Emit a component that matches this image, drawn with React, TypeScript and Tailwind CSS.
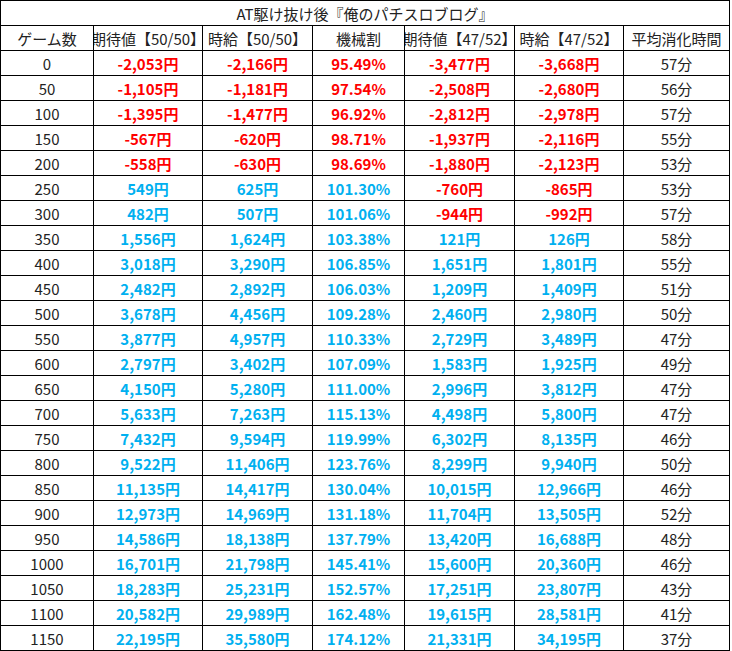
import React from "react";

const headers = ["ゲーム数", "期待値【50/50】", "時給【50/50】", "機械割", "期待値【47/52】", "時給【47/52】", "平均消化時間"];

const rows: string[][] = [
    ["0", "-2,053円", "-2,166円", "95.49%", "-3,477円", "-3,668円", "57分"],
    ["50", "-1,105円", "-1,181円", "97.54%", "-2,508円", "-2,680円", "56分"],
    ["100", "-1,395円", "-1,477円", "96.92%", "-2,812円", "-2,978円", "57分"],
    ["150", "-567円", "-620円", "98.71%", "-1,937円", "-2,116円", "55分"],
    ["200", "-558円", "-630円", "98.69%", "-1,880円", "-2,123円", "53分"],
    ["250", "549円", "625円", "101.30%", "-760円", "-865円", "53分"],
    ["300", "482円", "507円", "101.06%", "-944円", "-992円", "57分"],
    ["350", "1,556円", "1,624円", "103.38%", "121円", "126円", "58分"],
    ["400", "3,018円", "3,290円", "106.85%", "1,651円", "1,801円", "55分"],
    ["450", "2,482円", "2,892円", "106.03%", "1,209円", "1,409円", "51分"],
    ["500", "3,678円", "4,456円", "109.28%", "2,460円", "2,980円", "50分"],
    ["550", "3,877円", "4,957円", "110.33%", "2,729円", "3,489円", "47分"],
    ["600", "2,797円", "3,402円", "107.09%", "1,583円", "1,925円", "49分"],
    ["650", "4,150円", "5,280円", "111.00%", "2,996円", "3,812円", "47分"],
    ["700", "5,633円", "7,263円", "115.13%", "4,498円", "5,800円", "47分"],
    ["750", "7,432円", "9,594円", "119.99%", "6,302円", "8,135円", "46分"],
    ["800", "9,522円", "11,406円", "123.76%", "8,299円", "9,940円", "50分"],
    ["850", "11,135円", "14,417円", "130.04%", "10,015円", "12,966円", "46分"],
    ["900", "12,973円", "14,969円", "131.18%", "11,704円", "13,505円", "52分"],
    ["950", "14,586円", "18,138円", "137.79%", "13,420円", "16,688円", "48分"],
    ["1000", "16,701円", "21,798円", "145.41%", "15,600円", "20,360円", "46分"],
    ["1050", "18,283円", "25,231円", "152.57%", "17,251円", "23,807円", "43分"],
    ["1100", "20,582円", "29,989円", "162.48%", "19,615円", "28,581円", "41分"],
    ["1150", "22,195円", "35,580円", "174.12%", "21,331円", "34,195円", "37分"],
];

// red for losses (and payout under 100%), light blue otherwise
const valueColor = (v: string) => {
    if (v.startsWith("-")) return "text-[#ff0000]";
    if (v.endsWith("%") && parseFloat(v) < 100) return "text-[#ff0000]";
    return "text-[#00b0f0]";
};

const cell = "h-[25px] flex items-center justify-center overflow-hidden whitespace-nowrap border-r border-b border-black";

export default function App() {
    return (
        <div className="w-[732px] h-[651px] bg-white" style={{fontFamily: '"Noto Sans CJK JP", "Noto Sans", sans-serif'}}>
            <div className="grid grid-cols-[93px_109px_110px_92px_110px_109px_106px] w-[730px] border-l border-t border-black text-[15px] leading-none text-[#222]">
                <div className={`${cell} col-span-7`}>AT駆け抜け後『俺のパチスロブログ』</div>

                {headers.map((h, i) => (
                    <div key={i} className={cell}>{h}</div>
                ))}

                {rows.map((row, r) =>
                    row.map((v, c) => (
                        <div
                            key={`${r}-${c}`}
                            className={c === 0 || c === 6 ? cell : `${cell} font-bold ${valueColor(v)}`}
                        >
                            {v}
                        </div>
                    ))
                )}
            </div>
        </div>
    );
}
